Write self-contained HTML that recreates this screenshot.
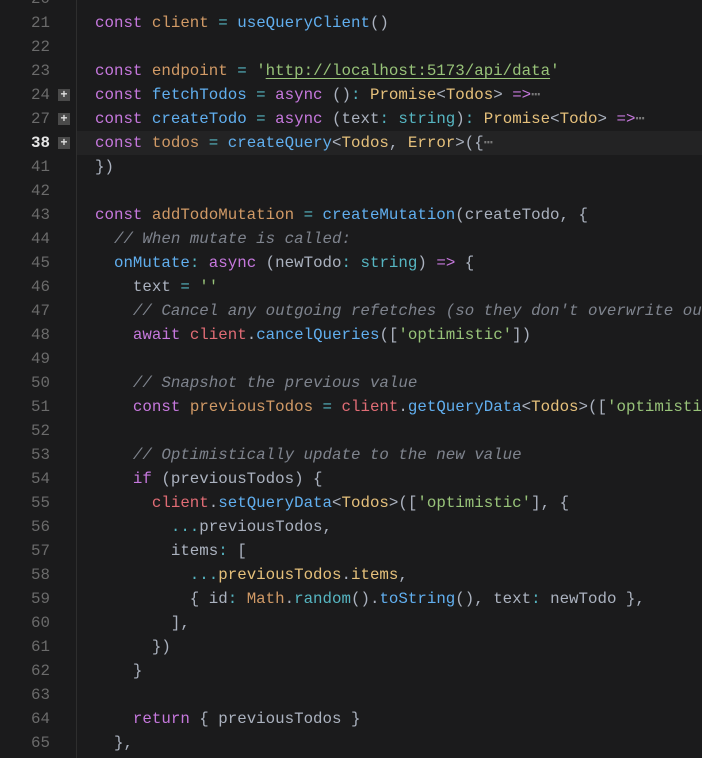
<!DOCTYPE html>
<html><head><meta charset="utf-8"><style>
html,body{margin:0;padding:0;background:#1b1b1c;width:702px;height:758px;overflow:hidden}
.ed{position:relative;width:702px;height:758px;overflow:hidden;font-family:"Liberation Mono",monospace;font-size:15.8px;color:#abb2bf}
.gut{position:absolute;left:76px;top:0;width:1px;height:758px;background:#2e2e2e}
.row{position:absolute;left:0;width:702px;height:24px;line-height:24px;white-space:pre;overflow:hidden;margin-top:1px}
.ln{position:absolute;left:0;width:50px;text-align:right;color:#6b6b6b}
.cur{background:#232324}
.fb{position:absolute;left:58px;top:6px;width:12px;height:12px;background:#4a4a4a;color:#ddd;font-size:12px;line-height:12px;text-align:center;font-weight:bold}
.code{position:absolute;left:95px}
.k{color:#c678dd}.v{color:#d19a66}.f{color:#61afef}.o{color:#56b6c2}.s{color:#98c379}.t{color:#e5c07b}.r{color:#e06c75}.c{color:#7f848e;font-style:italic}.e{color:#7a7a7a}
.u{text-decoration:underline;text-underline-offset:3px}
</style></head><body><div class="ed">
<div class="row" style="top:-14px"><span class="ln">20</span></div>
<div class="row" style="top:10px"><span class="ln">21</span><span class="code"><span class="k">const</span> <span class="v">client</span> <span class="o">=</span> <span class="f">useQueryClient</span>()</span></div>
<div class="row" style="top:34px"><span class="ln">22</span></div>
<div class="row" style="top:58px"><span class="ln">23</span><span class="code"><span class="k">const</span> <span class="v">endpoint</span> <span class="o">=</span> <span class="s">'<span class="u">http://localhost:5173/api/data</span>'</span></span></div>
<div class="row" style="top:82px"><span class="ln">24</span><span class="fb">+</span><span class="code"><span class="k">const</span> <span class="f">fetchTodos</span> <span class="o">=</span> <span class="k">async</span> ()<span class="o">:</span> <span class="t">Promise</span>&lt;<span class="t">Todos</span>&gt; <span class="k">=&gt;</span><span class="e">⋯</span></span></div>
<div class="row" style="top:106px"><span class="ln">27</span><span class="fb">+</span><span class="code"><span class="k">const</span> <span class="f">createTodo</span> <span class="o">=</span> <span class="k">async</span> (text<span class="o">:</span> <span class="o">string</span>)<span class="o">:</span> <span class="t">Promise</span>&lt;<span class="t">Todo</span>&gt; <span class="k">=&gt;</span><span class="e">⋯</span></span></div>
<div class="row cur" style="top:130px;left:77px;width:625px"></div>
<div class="row" style="top:130px"><span class="ln" style="color:#e6e6e6;font-weight:bold">38</span><span class="fb">+</span><span class="code"><span class="k">const</span> <span class="v">todos</span> <span class="o">=</span> <span class="f">createQuery</span>&lt;<span class="t">Todos</span>, <span class="t">Error</span>&gt;({<span class="e">⋯</span></span></div>
<div class="row" style="top:154px"><span class="ln">41</span><span class="code">})</span></div>
<div class="row" style="top:178px"><span class="ln">42</span></div>
<div class="row" style="top:202px"><span class="ln">43</span><span class="code"><span class="k">const</span> <span class="v">addTodoMutation</span> <span class="o">=</span> <span class="f">createMutation</span>(createTodo, {</span></div>
<div class="row" style="top:226px"><span class="ln">44</span><span class="code">  <span class="c">// When mutate is called:</span></span></div>
<div class="row" style="top:250px"><span class="ln">45</span><span class="code">  <span class="f">onMutate</span><span class="o">:</span> <span class="k">async</span> (newTodo<span class="o">:</span> <span class="o">string</span>) <span class="k">=&gt;</span> {</span></div>
<div class="row" style="top:274px"><span class="ln">46</span><span class="code">    text <span class="o">=</span> <span class="s">''</span></span></div>
<div class="row" style="top:298px"><span class="ln">47</span><span class="code">    <span class="c">// Cancel any outgoing refetches (so they don't overwrite ou</span></span></div>
<div class="row" style="top:322px"><span class="ln">48</span><span class="code">    <span class="k">await</span> <span class="r">client</span>.<span class="f">cancelQueries</span>([<span class="s">'optimistic'</span>])</span></div>
<div class="row" style="top:346px"><span class="ln">49</span></div>
<div class="row" style="top:370px"><span class="ln">50</span><span class="code">    <span class="c">// Snapshot the previous value</span></span></div>
<div class="row" style="top:394px"><span class="ln">51</span><span class="code">    <span class="k">const</span> <span class="v">previousTodos</span> <span class="o">=</span> <span class="r">client</span>.<span class="f">getQueryData</span>&lt;<span class="t">Todos</span>&gt;([<span class="s">'optimisti</span></span></div>
<div class="row" style="top:418px"><span class="ln">52</span></div>
<div class="row" style="top:442px"><span class="ln">53</span><span class="code">    <span class="c">// Optimistically update to the new value</span></span></div>
<div class="row" style="top:466px"><span class="ln">54</span><span class="code">    <span class="k">if</span> (previousTodos) {</span></div>
<div class="row" style="top:490px"><span class="ln">55</span><span class="code">      <span class="r">client</span>.<span class="f">setQueryData</span>&lt;<span class="t">Todos</span>&gt;([<span class="s">'optimistic'</span>], {</span></div>
<div class="row" style="top:514px"><span class="ln">56</span><span class="code">        <span class="o">...</span>previousTodos,</span></div>
<div class="row" style="top:538px"><span class="ln">57</span><span class="code">        items<span class="o">:</span> [</span></div>
<div class="row" style="top:562px"><span class="ln">58</span><span class="code">          <span class="o">...</span><span class="t">previousTodos</span>.<span class="t">items</span>,</span></div>
<div class="row" style="top:586px"><span class="ln">59</span><span class="code">          { id<span class="o">:</span> <span class="v">Math</span>.<span class="o">random</span>().<span class="f">toString</span>(), text<span class="o">:</span> newTodo },</span></div>
<div class="row" style="top:610px"><span class="ln">60</span><span class="code">        ],</span></div>
<div class="row" style="top:634px"><span class="ln">61</span><span class="code">      })</span></div>
<div class="row" style="top:658px"><span class="ln">62</span><span class="code">    }</span></div>
<div class="row" style="top:682px"><span class="ln">63</span></div>
<div class="row" style="top:706px"><span class="ln">64</span><span class="code">    <span class="k">return</span> { previousTodos }</span></div>
<div class="row" style="top:730px"><span class="ln">65</span><span class="code">  },</span></div>
<div class="gut"></div>
</div></body></html>
